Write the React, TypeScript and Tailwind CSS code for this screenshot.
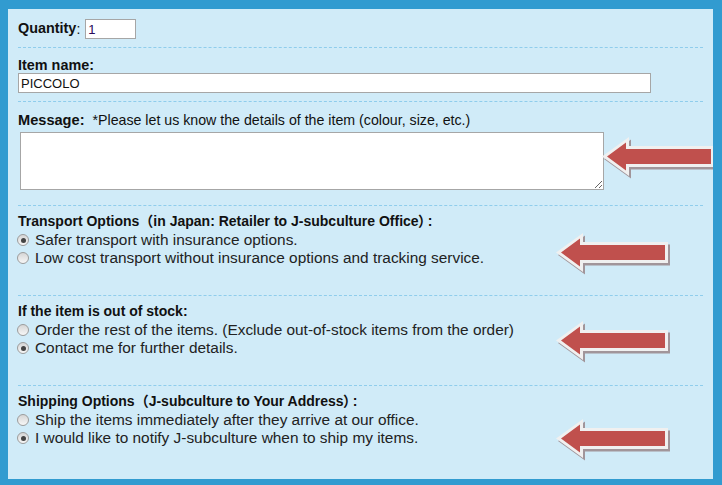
import React from 'react';

// Red "look here" arrow, same shape every time. Outline + drop shadow like the original.
function Arrow({ className }: { className: string }) {
  const outer = '1,20.5 28,1 28,10 113,10 113,31 28,31 28,40';
  const inner = '6,20.5 25,6.5 25,13 110,13 110,28 25,28 25,34.5';
  return (
    <svg className={`absolute pointer-events-none ${className}`} width="117" height="44" viewBox="0 0 117 44">
      <polygon points={outer} transform="translate(2,2.5)" fill="#a1959a" />
      <polygon points={outer} fill="#f0f0f0" />
      <polygon points={inner} fill="#c0504d" />
    </svg>
  );
}

function Radio({ checked, label }: { checked?: boolean; label: string }) {
  return (
    <div className="flex items-center h-[18px]">
      <span className="w-[12px] h-[12px] rounded-full border border-[#9c9c9c] bg-gradient-to-b from-[#d6d6d6] to-[#f7f7f7] flex items-center justify-center shrink-0 ml-[-1px]">
        {checked && <span className="w-[5px] h-[5px] rounded-full bg-[#444]" />}
      </span>
      <span className="ml-[6px] text-[15.4px] leading-[18px] text-[#222] whitespace-nowrap">{label}</span>
    </div>
  );
}

// full-width closing paren leaves a wide gap before the colon; proportional alt narrows it
function Title({ text }: { text: string }) {
  const [head, tail] = text.split('）');
  if (tail === undefined) return <>{text}</>;
  return (
    <>
      {head}
      <span className="[font-feature-settings:'palt']">）</span>
      <span className="ml-[2px]">{tail}</span>
    </>
  );
}

const SECTIONS: { title: string; options: { label: string; checked?: boolean }[] }[] = [
  {
    title: 'Transport Options（in Japan: Retailer to J-subculture Office）:',
    options: [
      { label: 'Safer transport with insurance options.', checked: true },
      { label: 'Low cost transport without insurance options and tracking service.' },
    ],
  },
  {
    title: 'If the item is out of stock:',
    options: [
      { label: 'Order the rest of the items. (Exclude out-of-stock items from the order)' },
      { label: 'Contact me for further details.', checked: true },
    ],
  },
  {
    title: 'Shipping Options（J-subculture to Your Address）:',
    options: [
      { label: 'Ship the items immediately after they arrive at our office.' },
      { label: 'I would like to notify J-subculture when to ship my items.', checked: true },
    ],
  },
];

const DASH = 'border-b border-dashed border-[#8fcdec]';

export default function App() {
  return (
    <div
      className="w-[722px] h-[485px] bg-[#319bd0] pl-[8px] pt-[9px] pr-[9px] pb-[6px] flex"
      style={{ fontFamily: '"Liberation Sans", Arial, "Noto Sans CJK JP", sans-serif' }}
    >
      <div className="relative flex-1 bg-[#d0ebf8] px-[10px] overflow-hidden text-[#111]">
        {/* Quantity */}
        <div className={`pt-[10px] pb-[8px] ${DASH}`}>
          <div className="flex items-center h-[20px] text-[14px]">
            <span className="font-bold text-[14.4px]">Quantity</span>
            <span>:&nbsp;</span>
            <input
              readOnly
              value="1"
              className="w-[51px] h-[20px] bg-white border border-[#a6a6a6] px-[2px] text-[13px] text-[#2a0a5a] outline-none ml-[1px]"
            />
          </div>
        </div>

        {/* Item name */}
        <div className={`pt-[9px] pb-[8px] ${DASH}`}>
          <div className="text-[14.4px] leading-[16px] font-bold">Item name:</div>
          <input
            readOnly
            value="PICCOLO"
            className="block w-[633px] h-[20px] bg-white border border-[#a6a6a6] px-[2px] text-[13px] text-[#111] outline-none"
          />
        </div>

        {/* Message */}
        <div className={`pt-[10px] pb-[15px] ${DASH}`}>
          <div className="text-[14px] leading-[16px] whitespace-nowrap">
            <span className="font-bold text-[14.6px]">Message:</span>
            <span className="ml-[8px] text-[14.2px]">*Please let us know the details of the item (colour, size, etc.)</span>
          </div>
          <textarea
            readOnly
            className="block mt-[4px] ml-[2px] w-[584px] h-[58px] bg-white border border-[#a6a6a6] outline-none resize"
          />
        </div>

        {/* Option groups */}
        {SECTIONS.map((s, i) => (
          <div key={s.title} className={`pt-[7px] pb-[28px] ${i < SECTIONS.length - 1 ? DASH : ''}`}>
            <div className="text-[14px] leading-[16px] font-bold whitespace-nowrap">
              <Title text={s.title} />
            </div>
            <div className="mt-[2px] flex flex-col">
              {s.options.map(o => (
                <Radio key={o.label} label={o.label} checked={o.checked} />
              ))}
            </div>
          </div>
        ))}

        <Arrow className="left-[593px] top-[127px]" />
        <Arrow className="left-[547px] top-[223px]" />
        <Arrow className="left-[547px] top-[311px]" />
        <Arrow className="left-[547px] top-[409px]" />
      </div>
    </div>
  );
}
